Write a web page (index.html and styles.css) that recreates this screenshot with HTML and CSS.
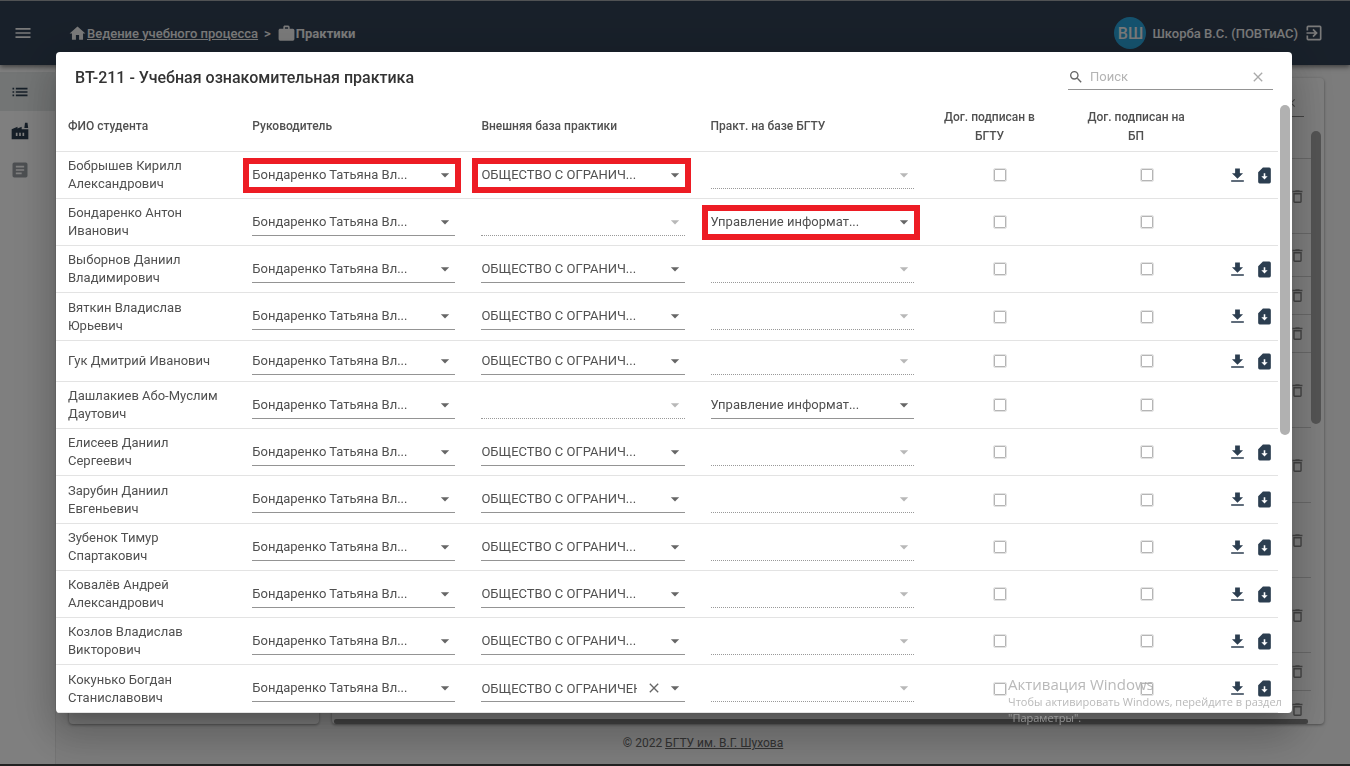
FILE: index.html
```html
<!DOCTYPE html>
<html lang="ru">
<head>
<meta charset="utf-8">
<title>Практики</title>
<link rel="stylesheet" href="styles.css">
</head>
<body>
<svg class="sprite" aria-hidden="true">
  <symbol id="menu" viewBox="0 0 24 24"><path d="M3 6h18v2H3V6m0 5h18v2H3v-2m0 5h18v2H3v-2Z"/></symbol>
  <symbol id="home" viewBox="0 0 24 24"><path d="M10 20v-6h4v6h5v-8h3L12 3 2 12h3v8h5Z"/></symbol>
  <symbol id="bag" viewBox="0 0 24 24"><path d="M10 2h4a2 2 0 0 1 2 2v2h4a2 2 0 0 1 2 2v11a2 2 0 0 1-2 2H4a2 2 0 0 1-2-2V8c0-1.100.9-2 2-2h4V4c0-1.100.9-2 2-2m4 4V4h-4v2h4Z"/></symbol>
  <symbol id="exit" viewBox="0 0 24 24"><path d="M19 3H5a2 2 0 0 0-2 2v4h2V5h14v14H5v-4H3v4a2 2 0 0 0 2 2h14a2 2 0 0 0 2-2V5a2 2 0 0 0-2-2m-8.900 12.600L11.500 17l5-5-5-5-1.400 1.400L12.700 11H3v2h9.700l-2.600 2.600Z"/></symbol>
  <symbol id="list" viewBox="0 0 24 24"><path d="M3 13h2v-2H3v2m0 4h2v-2H3v2m0-8h2V7H3v2m4 4h14v-2H7v2m0 4h14v-2H7v2M7 7v2h14V7H7Z"/></symbol>
  <symbol id="factory" viewBox="0 0 24 24"><path fill-rule="evenodd" d="M22 10v12H2V10l7-3v2l5-2v3h8m-4.800-1.500L18 2h3l.8 6.500h-4.600M11 18h2v-4h-2v4m-4 0h2v-4H7v4m10-4h-2v4h2v-4Z"/></symbol>
  <symbol id="article" viewBox="0 0 24 24"><path d="M19 3H5a2 2 0 0 0-2 2v14a2 2 0 0 0 2 2h14a2 2 0 0 0 2-2V5a2 2 0 0 0-2-2m-5 14H7v-2h7v2m3-4H7v-2h10v2m0-4H7V7h10v2Z"/></symbol>
  <symbol id="search" viewBox="0 0 24 24"><path d="M9.500 3A6.500 6.500 0 0 1 16 9.500c0 1.610-.59 3.090-1.560 4.230l.27.27h.79l5 5-1.500 1.500-5-5v-.79l-.27-.27A6.516 6.516 0 0 1 9.500 16a6.500 6.500 0 1 1 0-13m0 2C7 5 5 7 5 9.500S7 14 9.500 14 14 12 14 9.500 12 5 9.500 5Z"/></symbol>
  <symbol id="close" viewBox="0 0 24 24"><path d="M19 6.410 17.590 5 12 10.590 6.410 5 5 6.410 10.590 12 5 17.590 6.410 19 12 13.410 17.590 19 19 17.590 13.410 12 19 6.410Z"/></symbol>
  <symbol id="down" viewBox="0 0 24 24"><path d="m7 10 5 5 5-5H7Z"/></symbol>
  <symbol id="download" viewBox="0 0 24 24"><path d="M4 20h16v-2H4m15-9h-4V3H9v6H5l7 7 7-7Z"/></symbol>
  <symbol id="card" viewBox="0 0 24 24"><path fill-rule="evenodd" d="M18 2h-8L4 8v12a2 2 0 0 0 2 2h12a2 2 0 0 0 2-2V4a2 2 0 0 0-2-2m-6 15-4-4h3V9.020L13 9v4h3l-4 4Z"/></symbol>
  <symbol id="trash" viewBox="0 0 24 24"><path d="M6 19a2 2 0 0 0 2 2h8a2 2 0 0 0 2-2V7H6v12M8 9h8v10H8V9m7.500-5-1-1h-5l-1 1H5v2h14V4h-3.500Z"/></symbol>
</svg>

<div class="app">
  <header class="topbar">
    <button class="icon-button" aria-label="Меню"><svg class="icon"><use href="#menu"/></svg></button>
    <nav class="crumbs">
      <svg class="icon"><use href="#home"/></svg><a href="#">Ведение учебного процесса</a>
      <span class="crumb-sep">&gt;</span>
      <svg class="icon"><use href="#bag"/></svg><b>Практики</b>
    </nav>
    <div class="user">
      <span class="avatar">ВШ</span>
      <span>Шкорба В.С. (ПОВТиАС)</span>
      <button class="icon-button" aria-label="Выход"><svg class="icon"><use href="#exit"/></svg></button>
    </div>
  </header>
  <div class="body">
    <aside class="rail">
      <a class="rail-item active" href="#" aria-label="Список"><svg class="icon"><use href="#list"/></svg></a>
      <a class="rail-item" href="#" aria-label="Предприятия"><svg class="icon"><use href="#factory"/></svg></a>
      <a class="rail-item muted" href="#" aria-label="Документы"><svg class="icon"><use href="#article"/></svg></a>
    </aside>
    <main class="content">
      <div class="panels">
        <section class="panel"></section>
        <section class="panel panel-wide">
          <div class="panel-main">
            <div class="panel-search"><svg class="icon"><use href="#close"/></svg></div>
            <div class="panel-head"></div>
            <div class="panel-rows" id="back-rows"></div>
          </div>
          <div class="panel-scroll"></div>
          <div class="panel-hscroll"></div>
        </section>
      </div>
    </main>
  </div>
  <footer class="footer">© 2022 <a href="#">БГТУ им. В.Г. Шухова</a></footer>
  <div class="taskbar"></div>
</div>

<div class="overlay">
  <div class="dialog" role="dialog" aria-labelledby="dialog-title">
    <div class="dialog-head">
      <h1 id="dialog-title">ВТ-211 - Учебная ознакомительная практика</h1>
      <div class="search">
        <svg class="icon"><use href="#search"/></svg>
        <input type="text" placeholder="Поиск" aria-label="Поиск">
        <button class="icon-button" aria-label="Очистить"><svg class="icon"><use href="#close"/></svg></button>
      </div>
    </div>
    <div class="dialog-body">
      <div class="table-area">
        <table>
          <colgroup><col class="c-name"><col class="c-field"><col class="c-field"><col class="c-field"><col class="c-check"><col class="c-check"><col></colgroup>
          <thead>
            <tr><th>ФИО студента</th><th>Руководитель</th><th>Внешняя база практики</th><th>Практ. на базе БГТУ</th><th class="center">Дог. подписан в БГТУ</th><th class="center">Дог. подписан на БП</th><th></th></tr>
          </thead>
          <tbody id="rows"></tbody>
        </table>
      </div>
      <div class="scroll"><div class="thumb"></div></div>
    </div>
  </div>
</div>

<div class="activation">
  <div class="activation-title">Активация Windows</div>
  <div>Чтобы активировать Windows, перейдите в раздел "Параметры".</div>
</div>
<script src="app.js"></script>
</body>
</html>
```
FILE: app.js
```js
const EXTERNAL = 'ОБЩЕСТВО С ОГРАНИЧ...';
const INTERNAL = 'Управление информат...';
const TEACHER = 'Бондаренко Татьяна Вл...';

const students = [
  { name: 'Бобрышев Кирилл Александрович', marks: ['teacher', 'external'] },
  { name: 'Бондаренко Антон Иванович', internal: true, marks: ['internal'] },
  { name: 'Выборнов Даниил Владимирович' },
  { name: 'Вяткин Владислав Юрьевич' },
  { name: 'Гук Дмитрий Иванович', short: true },
  { name: 'Дашлакиев Або-Муслим Даутович', internal: true },
  { name: 'Елисеев Даниил Сергеевич' },
  { name: 'Зарубин Даниил Евгеньевич' },
  { name: 'Зубенок Тимур Спартакович' },
  { name: 'Ковалёв Андрей Александрович' },
  { name: 'Козлов Владислав Викторович' },
  { name: 'Кокунько Богдан Станиславович', editing: true },
];

const icon = (id) => `<svg class="icon"><use href="#${id}"/></svg>`;

function field(label, value, marked) {
  const state = value ? '' : ' disabled';
  return `<div class="field${state}${marked ? ' marked' : ''}">
    <select aria-label="${label}"${state}><option>${value}</option></select>${icon('down')}</div>`;
}

function editor(label, value) {
  return `<div class="field"><input type="text" aria-label="${label}" value="${value}">
    <button class="icon-button clear" aria-label="Очистить">${icon('close')}</button>${icon('down')}</div>`;
}

document.getElementById('rows').innerHTML = students.map((s) => {
  const marks = s.marks || [];
  const external = s.editing
    ? editor('Внешняя база практики', 'ОБЩЕСТВО С ОГРАНИЧЕННОЙ')
    : field('Внешняя база практики', s.internal ? '' : EXTERNAL, marks.includes('external'));
  const actions = s.internal ? '' : `<div class="actions">
    <button class="icon-button" aria-label="Скачать">${icon('download')}</button>
    <button class="icon-button" aria-label="Сохранить">${icon('card')}</button></div>`;
  return `<tr class="${s.short ? 'short' : ''}">
    <td>${s.name}</td>
    <td>${field('Руководитель', TEACHER, marks.includes('teacher'))}</td>
    <td>${external}</td>
    <td>${field('Практ. на базе БГТУ', s.internal ? INTERNAL : '', marks.includes('internal'))}</td>
    <td class="check"><input type="checkbox" aria-label="Договор подписан в БГТУ"></td>
    <td class="check"><input type="checkbox" aria-label="Договор подписан на БП"></td>
    <td class="last">${actions}</td></tr>`;
}).join('');

const backRows = ['tall', 'mid', '', '', 'tall', 'tall', 'tall', 'tall', '', ''];
document.getElementById('back-rows').innerHTML =
  backRows.map((c) => `<div class="back-row ${c}">${icon('trash')}</div>`).join('');
```
FILE: styles.css
```css
* { box-sizing: border-box; }

body {
  margin: 0;
  font-family: Roboto, "Noto Sans", sans-serif;
  font-size: 13px;
  color: #505050;
  overflow: hidden;
}

.sprite { display: none; }
.icon { width: 20px; height: 20px; fill: currentColor; flex: none; display: block; }

.icon-button {
  display: flex;
  padding: 0;
  border: 0;
  background: none;
  color: inherit;
}

/* Application behind the dialog */
.app { display: flex; flex-direction: column; height: 100vh; background: #f8f8f8; }

.topbar {
  flex: none;
  display: flex;
  align-items: center;
  height: 65px;
  padding: 0 26px 0 13px;
  border-top: 1px solid #a0a4a8;
  background: #314154;
  color: #f4f4f4;
  font-weight: 500;
  font-size: 13px;
  box-shadow: 0 2px 5px rgba(0, 0, 0, .5);
  z-index: 1;
}
.crumbs { display: flex; align-items: center; margin-left: 35px; flex: 1; }
.crumbs .icon { width: 19px; height: 19px; }
.crumbs a { color: inherit; }
.crumb-sep { margin: 0 6px; }
.user { display: flex; align-items: center; gap: 6px; }
.avatar {
  display: grid;
  place-items: center;
  width: 32px;
  height: 32px;
  border-radius: 50%;
  background: #2aa5dc;
  font-size: 16px;
}

.body { flex: 1; display: flex; min-height: 0; }
.rail { width: 56px; padding-top: 7px; margin-bottom: -40px; background: #fff; border-right: 1px solid #e8e8e8; }
.rail-item { display: flex; align-items: center; height: 39px; padding-left: 10px; color: #2c3e50; }
.rail-item.active { background: #e6eaea; }
.rail-item.muted { color: #9a9fa4; }

.content { flex: 1; display: flex; flex-direction: column; min-width: 0; }
.panels { flex: 1; display: flex; gap: 13px; min-height: 0; padding: 13px 26px 0 13px; }
.panel { width: 250px; background: #fdfdfd; border-radius: 4px; box-shadow: 0 1px 3px rgba(0, 0, 0, .4); }
.panel-wide {
  flex: 1;
  display: grid;
  grid-template: minmax(0, 1fr) 5px / 1fr 13px;
}
.panel-main { display: flex; flex-direction: column; overflow: hidden; }
.panel-search {
  display: flex;
  justify-content: flex-end;
  margin-top: 16px;
  margin-right: 7px;
  padding: 2px 6px 6px;
  border-bottom: 1px solid #888;
  color: #888;
}
.panel-search .icon { width: 14px; height: 14px; }
.panel-head { flex: none; height: 42px; border-bottom: 1px solid #d0d0d0; }
.back-row {
  display: flex;
  align-items: center;
  justify-content: flex-end;
  height: 38px;
  padding-right: 5px;
  border-bottom: 1px solid #d0d0d0;
  color: #888;
}
.back-row.tall { height: 75px; }
.back-row.mid { height: 43px; }
.back-row .icon { width: 17px; height: 17px; }
.panel-scroll { width: 10px; height: 293px; margin-top: 53px; border-radius: 5px; background: #a8a8a8; }
.panel-hscroll { margin: 0 3px 0 2px; background: #888; border-radius: 2px; }

.footer {
  flex: none;
  padding: 12px 0 14px 56px;
  text-align: center;
  font-size: 12px;
  line-height: 14px;
  color: #666;
}
.footer a { color: inherit; }
.taskbar { flex: none; height: 2px; background: #444; }

/* Modal */
.overlay {
  position: fixed;
  inset: 0;
  z-index: 2;
  display: flex;
  padding: 52px 58px 53px 56px;
  background: rgba(0, 0, 0, .5);
}
.dialog {
  flex: 1;
  display: flex;
  flex-direction: column;
  min-width: 0;
  border-radius: 4px;
  background: #fff;
  overflow: hidden;
  box-shadow: 0 11px 15px -7px rgba(0, 0, 0, .2), 0 24px 38px 3px rgba(0, 0, 0, .14), 0 9px 46px 8px rgba(0, 0, 0, .12);
}
.dialog-head {
  flex: none;
  display: flex;
  align-items: center;
  justify-content: space-between;
  height: 50px;
  padding: 0 19px;
}
.dialog-head h1 { margin: 0; font-size: 16px; font-weight: 500; color: #333; }
.search {
  display: flex;
  align-items: center;
  width: 205px;
  height: 26px;
  border-bottom: 1px solid #949494;
  color: #666;
}
.search .icon { width: 16px; height: 16px; }
.search input {
  flex: 1;
  min-width: 0;
  margin-left: 6px;
  padding: 0;
  border: 0;
  outline: 0;
  font: inherit;
}
.search input::placeholder { color: #b4b4b4; }
.search .icon-button { margin-right: 7px; color: #aaa; }

.dialog-body { flex: 1; display: flex; min-height: 0; }
.table-area { flex: 1; min-width: 0; overflow: hidden; }
.scroll { flex: none; width: 14px; padding: 3px 2px 0; }
.thumb { height: 330px; border-radius: 5px; background: #b1b1b1; }

table { width: 100%; border-collapse: separate; border-spacing: 0; table-layout: fixed; }
.c-name { width: 15%; }
.c-field { width: 18.75%; }
.c-check { width: 12%; }
th {
  height: 50px;
  padding: 0 13px 0 12px;
  border-bottom: 1px solid #e3e3e3;
  font-size: 12px;
  font-weight: 500;
  line-height: 19px;
  text-align: left;
  color: #505050;
}
th.center { padding: 0 33px 0 12px; text-align: center; }
td {
  height: 47px;
  padding: 0 13px;
  border-bottom: 1px solid #e3e3e3;
  line-height: 18px;
}
td:first-child { padding-left: 12px; }
tr:nth-child(4n) td { height: 48px; }
tr.short td { height: 41px; }
td.check, td.last { padding: 0; }
th:nth-child(n+2):nth-child(-n+4) { padding-left: 13px; }

.field {
  position: relative;
  display: flex;
  align-items: center;
  height: 27px;
  border-bottom: 1px solid #949494;
}
.field select, .field input {
  flex: 1;
  min-width: 0;
  height: 24px;
  padding: 0;
  border: 0;
  outline: 0;
  background: none;
  appearance: none;
  font: inherit;
  color: #505050;
  opacity: 1;
}
.field .icon { color: #666; }
.field.disabled { border-bottom-style: dotted; border-bottom-color: #999; }
.field.disabled .icon { color: #b8b8b8; }
.field .clear { margin: 0 3px 0 9px; }
.field .clear .icon { width: 16px; height: 16px; }
.field.marked::after {
  content: "";
  position: absolute;
  inset: -4px -6px -5px -9px;
  border: 6px solid #ed1c24;
}

.check { text-align: center; }
.check input {
  display: block;
  width: 12px;
  height: 12px;
  margin: 0 auto;
  appearance: none;
  border: 1px solid #b5b5b5;
  outline: 1px solid #e2e2e2;
  border-radius: 1px;
}
.actions { display: flex; gap: 8px; padding-left: 8px; color: #2c3e50; }
.actions .icon { width: 19px; height: 19px; }

/* System notice over everything */
.activation {
  position: fixed;
  right: 48px;
  bottom: 40px;
  z-index: 3;
  width: 294px;
  font-family: "Open Sans", "Noto Sans", sans-serif;
  font-size: 11px;
  line-height: 16px;
  color: rgba(168, 168, 168, .8);
  pointer-events: none;
}
.activation-title { font-size: 15px; line-height: 20px; }
```
